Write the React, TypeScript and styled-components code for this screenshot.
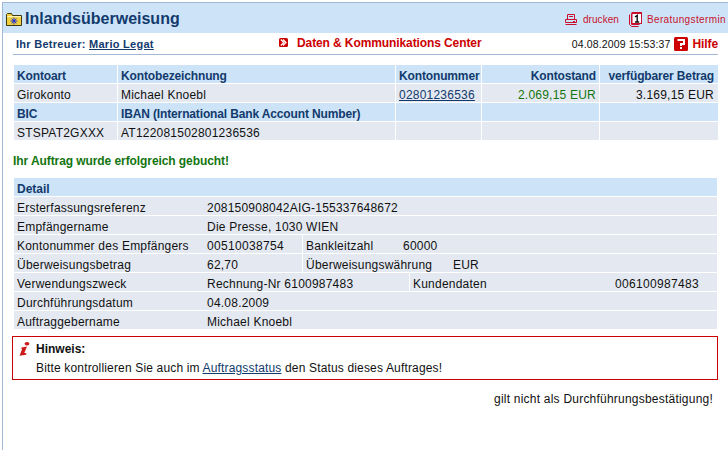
import React from "react";
import styled, { createGlobalStyle } from "styled-components";

const Global = createGlobalStyle`
  html, body { margin: 0; padding: 0; background: #fff; }
  body { font-family: "Liberation Sans", Arial, sans-serif; font-size: 12px; color: #111; letter-spacing: 0.22px; }
  * { box-sizing: border-box; }
`;

const Page = styled.div`
  width: 728px;
  height: 450px;
  overflow: hidden;
  padding-top: 2px;
  padding-left: 2px;
  background: #fff;
`;
const Frame = styled.div`
  height: 448px;
  border-left: 1px solid #a3b8d3;
  border-top: 1px solid #a3b8d3;
`;
const TitleBar = styled.div`
  height: 30px;
  background: #cde4f8;
  display: flex;
  align-items: center;
  padding: 2px 2px 0 3px;
`;
const Title = styled.h1`
  margin: 0 0 0 3px;
  font-size: 16px;
  font-weight: bold;
  letter-spacing: 0;
  color: #123a6d;
  flex: 1;
`;
const Tool = styled.span<{ $tight?: boolean }>`
  display: inline-flex;
  align-items: center;
  gap: ${(p) => (p.$tight ? "6px" : "5px")};
  font-size: 10px;
  letter-spacing: ${(p) => (p.$tight ? "0.05px" : "0.38px")};
  color: #c8102e;
  margin-left: 10px;
`;
const InfoBar = styled.div`
  height: 22px;
  margin: 0 10px;
  border-bottom: 1px solid #a3b8d3;
  display: grid;
  grid-template-columns: 263px 1fr auto;
  align-items: center;
  padding: 0 0 0 3px;
`;
const Advisor = styled.span`
  font-size: 11px;
  font-weight: bold;
  letter-spacing: 0.28px;
  color: #123a6d;
`;
const StrongLink = styled.a`
  color: #123a6d;
  text-decoration: underline;
`;
const CenterLink = styled.span`
  display: inline-flex;
  align-items: center;
  gap: 9px;
  font-weight: bold;
  letter-spacing: -0.1px;
  color: #cc0000;
  margin-top: -2px;
`;
const Stamp = styled.span`
  display: inline-flex;
  align-items: center;
  font-size: 10.5px;
  letter-spacing: 0.12px;
  color: #111;
  gap: 4px;
`;
const Help = styled.span`
  font-size: 12px;
  font-weight: bold;
  letter-spacing: -0.1px;
  color: #cc0000;
`;
const Content = styled.div`
  padding: 10px 10px 0 11px;
`;
const AccountGrid = styled.div`
  display: grid;
  width: 703px;
  grid-template-columns: 103px 277px 85px 117px 118px;
  gap: 1px;
  grid-auto-rows: 18px;
`;
const Cell = styled.div<{ $head?: boolean; $right?: boolean; $tone?: string; $end?: boolean }>`
  background: ${(p) => (p.$head ? "#cde4f8" : "#e4e9f1")};
  color: ${(p) => (p.$head ? "#123a6d" : p.$tone || "#111")};
  font-weight: ${(p) => (p.$head ? "bold" : "normal")};
  letter-spacing: ${(p) => (p.$head ? "-0.14px" : "0.22px")};
  text-align: ${(p) => (p.$right ? "right" : "left")};
  padding: 2px ${(p) => (p.$end ? "4px" : "3px")} 0 3px;
  line-height: 18px;
  white-space: nowrap;
  overflow: hidden;
`;
const Success = styled.div`
  font-weight: bold;
  letter-spacing: -0.08px;
  color: #13750f;
  margin: 14px 0 0 -1px;
  height: 15px;
  line-height: 15px;
`;
const DetailTable = styled.div`
  width: 703px;
  margin-top: 9px;
  display: flex;
  flex-direction: column;
  gap: 1px;
`;
const HeadRow = styled.div`
  height: 18px;
  line-height: 18px;
  padding: 2px 3px 0;
  background: #cde4f8;
  color: #123a6d;
  font-weight: bold;
  letter-spacing: 0;
  overflow: hidden;
`;
const Row = styled.div`
  height: 18px;
  background: #e4e9f1;
  display: flex;
  white-space: nowrap;
  overflow: hidden;
`;
const Part = styled.span<{ $w?: number; $split?: boolean; $digits?: boolean }>`
  ${(p) => (p.$w ? `width: ${p.$w}px;` : "")}
  ${(p) => (p.$digits ? "letter-spacing: 0.33px;" : "")}
  padding: 2px 3px 0;
  line-height: 18px;
  flex: none;
  ${(p) => (p.$split ? "border-left: 1px solid #fff;" : "")}
`;
const Note = styled.div`
  width: 706px;
  height: 44px;
  margin: 7px 0 0 -2px;
  border: 1px solid #cc0000;
  display: grid;
  grid-template-columns: 17px 1fr;
  padding: 3px 0 0 6px;
`;
const NoteMark = styled.span`
  display: block;
  padding-top: 2px;
`;
const NoteText = styled.div`
  line-height: 19px;
  letter-spacing: 0.16px;
`;
const NoteTitle = styled.div`
  font-weight: bold;
  letter-spacing: 0;
`;
const BodyLink = styled.a`
  color: #123a6d;
  text-decoration: underline;
`;
const Footnote = styled.div`
  width: 699px;
  text-align: right;
  margin-top: 12px;
`;

const FolderIcon = () => (
  <svg width="16" height="13" viewBox="0 0 16 13">
    <path d="M.5 12.5V1.5l1-1h4l1 2h9v10z" fill="#f2cf3c" stroke="#3d3a14" />
    <rect x="1" y="3" width="14" height="1.2" fill="#fff4b0" />
    <path d="M8 4.5v7M4.6 8h6.8M5.6 5.6l4.8 4.8M10.4 5.6l-4.8 4.8" stroke="#1a2fd8" />
  </svg>
);
const PrinterIcon = () => (
  <svg width="12" height="11" viewBox="0 0 12 11" fill="none" stroke="#c8102e">
    <path d="M2.5.5h7v5h-7zM4 2.5h4" />
    <path d="M.5 5.5h11v3H.5zM.5 10.5h11" />
    <path d="M8 7.5h2" />
  </svg>
);
const CalendarIcon = () => (
  <svg width="13" height="15" viewBox="0 0 13 15">
    <path d="M.5 2.5v10l2 2h7" fill="none" stroke="#c8102e" />
    <path d="M2.5 1.5v11h8" fill="none" stroke="#c8102e" />
    <rect x="3" y=".5" width="9.5" height="11" fill="#fff" stroke="#c8102e" strokeWidth="1" />
    <rect x="3" y="0" width="10" height="2" fill="#c8102e" />
    <path d="M6 5l2.2-1.6V10M6 10h4.2" stroke="#111" strokeWidth="1.4" fill="none" />
  </svg>
);
const ChevronIcon = () => (
  <svg width="9" height="9" viewBox="0 0 9 9">
    <rect width="9" height="9" rx="1.5" fill="#cc0000" />
    <path d="M1.8 1.5L4.8 4.5L1.8 7.5M4 1.5L7 4.5L4 7.5" fill="none" stroke="#fff" strokeWidth="1.2" />
  </svg>
);
const HelpIcon = () => (
  <svg width="14" height="14" viewBox="0 0 14 14">
    <rect width="14" height="14" rx="1.5" fill="#cc0000" />
    <path d="M3.5 3h6.5v4H7v2" fill="none" stroke="#fff" strokeWidth="2" />
    <rect x="6" y="10" width="2" height="2" fill="#fff" />
  </svg>
);
const InfoIcon = () => (
  <svg width="11" height="14" viewBox="0 0 11 14">
    <ellipse cx="8" cy="1.8" rx="2.4" ry="1.7" fill="#cc1a1a" />
    <path d="M2.5 5.4L8 4.4L5.3 11L7.6 11.2L7 12.8L.6 13.8L3.2 6.8L2 6.6z" fill="#cc1a1a" />
  </svg>
);

export default function App() {
  return (
    <Page>
      <Global />
      <Frame>
        <TitleBar>
          <FolderIcon />
          <Title>Inlandsüberweisung</Title>
          <Tool $tight><PrinterIcon />drucken</Tool>
          <Tool><CalendarIcon />Beratungstermin</Tool>
        </TitleBar>
        <InfoBar>
          <Advisor>Ihr Betreuer: <StrongLink>Mario Legat</StrongLink></Advisor>
          <CenterLink><ChevronIcon />Daten &amp; Kommunikations Center</CenterLink>
          <Stamp>04.08.2009 15:53:37 <HelpIcon /><Help>Hilfe</Help></Stamp>
        </InfoBar>
        <Content>
          <AccountGrid>
            <Cell $head>Kontoart</Cell>
            <Cell $head>Kontobezeichnung</Cell>
            <Cell $head>Kontonummer</Cell>
            <Cell $head $right>Kontostand</Cell>
            <Cell $head $right $end>verfügbarer Betrag</Cell>
            <Cell>Girokonto</Cell>
            <Cell>Michael Knoebl</Cell>
            <Cell><BodyLink>02801236536</BodyLink></Cell>
            <Cell $right $tone="#13750f">2.069,15 EUR</Cell>
            <Cell $right $end>3.169,15 EUR</Cell>
            <Cell $head>BIC</Cell>
            <Cell $head>IBAN (International Bank Account Number)</Cell>
            <Cell $head />
            <Cell $head />
            <Cell $head />
            <Cell>STSPAT2GXXX</Cell>
            <Cell>AT122081502801236536</Cell>
            <Cell />
            <Cell />
            <Cell />
          </AccountGrid>
          <Success>Ihr Auftrag wurde erfolgreich gebucht!</Success>
          <DetailTable>
            <HeadRow>Detail</HeadRow>
            <Row><Part $w={190}>Ersterfassungsreferenz</Part><Part>208150908042AIG-155337648672</Part></Row>
            <Row><Part $w={190}>Empfängername</Part><Part>Die Presse, 1030 WIEN</Part></Row>
            <Row><Part $w={190}>Kontonummer des Empfängers</Part><Part $w={98} $digits>00510038754</Part><Part $w={98} $split>Bankleitzahl</Part><Part>60000</Part></Row>
            <Row><Part $w={190}>Überweisungsbetrag</Part><Part $w={98}>62,70</Part><Part $w={148} $split>Überweisungswährung</Part><Part>EUR</Part></Row>
            <Row><Part $w={190}>Verwendungszweck</Part><Part $w={205}>Rechnung-Nr 6100987483</Part><Part $w={203} $split>Kundendaten</Part><Part $digits>006100987483</Part></Row>
            <Row><Part $w={190}>Durchführungsdatum</Part><Part>04.08.2009</Part></Row>
            <Row><Part $w={190}>Auftraggebername</Part><Part>Michael Knoebl</Part></Row>
          </DetailTable>
          <Note>
            <NoteMark><InfoIcon /></NoteMark>
            <NoteText>
              <NoteTitle>Hinweis:</NoteTitle>
              Bitte kontrollieren Sie auch im <BodyLink>Auftragsstatus</BodyLink> den Status dieses Auftrages!
            </NoteText>
          </Note>
          <Footnote>gilt nicht als Durchführungsbestätigung!</Footnote>
        </Content>
      </Frame>
    </Page>
  );
}
